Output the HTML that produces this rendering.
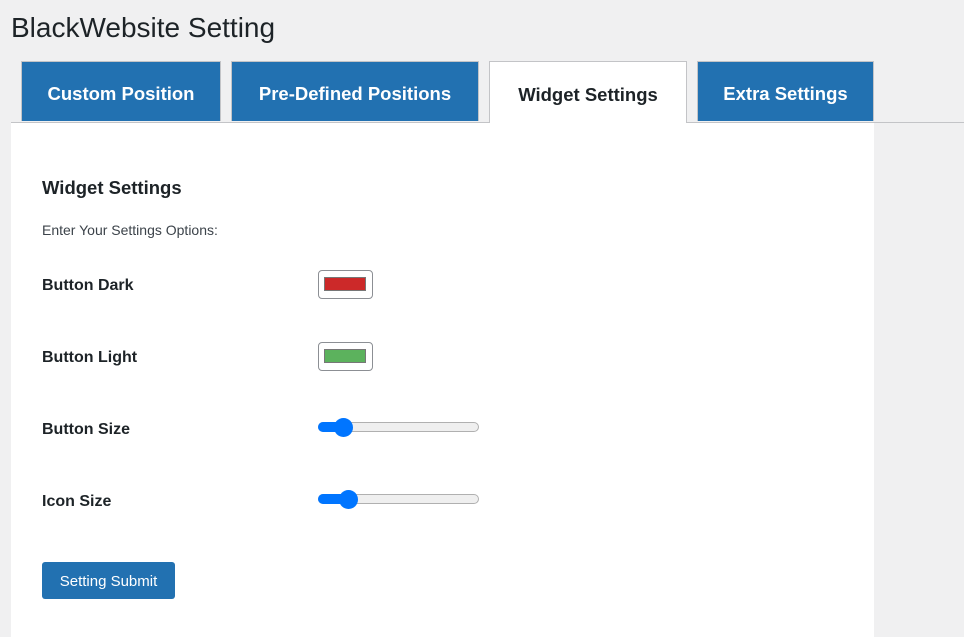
<!DOCTYPE html>
<html><head><style>
body{margin:0;width:964px;height:637px;background:#f0f0f1;font-family:"Segoe UI","Liberation Sans",sans-serif;position:relative;overflow:hidden;color:#1d2327}
.a{position:absolute}
.tab{position:absolute;top:61px;height:60px;padding-top:5px;background:#2271b1;border:1px solid #c3c4c7;border-bottom:none;box-sizing:border-box;color:#fff;font-weight:bold;font-size:18.5px;display:flex;align-items:center;justify-content:center}
.lbl{position:absolute;left:42px;font-size:16px;font-weight:600}
.sw{position:absolute;left:318px;width:55px;height:29px;border:1px solid #8c8f94;border-radius:4px;box-sizing:border-box;background:#fff}
.sw i{position:absolute;left:5px;top:6px;width:42px;height:14px;border:1px solid #777;box-sizing:border-box}
.tr{position:absolute;left:318px;width:161px;height:10px;border:1px solid #b0b0b0;border-radius:5px;background:#efefef;box-sizing:border-box}
.fill{position:absolute;left:318px;height:10px;border-radius:5px;background:#0075ff}
.th{position:absolute;width:19px;height:19px;border-radius:50%;background:#0075ff}
</style></head><body>
<div class="a" style="left:11px;top:12px;font-size:28px;color:#1d2327">BlackWebsite Setting</div>
<div class="a" style="left:11px;top:122px;width:953px;height:1px;background:#c3c4c7"></div>
<div class="a" style="left:11px;top:123px;width:863px;height:514px;background:#fff"></div>
<div class="tab" style="left:21px;width:200px">Custom Position</div>
<div class="tab" style="left:231px;width:248px">Pre-Defined Positions</div>
<div class="tab" style="left:489px;width:198px;height:62px;background:#fff;color:#1d2327">Widget Settings</div>
<div class="tab" style="left:697px;width:177px">Extra Settings</div>
<div class="a" style="left:42px;top:177px;font-size:18.5px;font-weight:600">Widget Settings</div>
<div class="a" style="left:42px;top:222px;font-size:14px;color:#3c434a">Enter Your Settings Options:</div>
<div class="lbl" style="top:277px">Button Dark</div>
<div class="lbl" style="top:349px">Button Light</div>
<div class="lbl" style="top:421px">Button Size</div>
<div class="lbl" style="top:493px">Icon Size</div>
<div class="sw" style="top:270px"><i style="background:#cc2929"></i></div>
<div class="sw" style="top:342px"><i style="background:#5cb25d"></i></div>
<div class="tr" style="top:422px"></div><div class="fill" style="top:422px;width:26px"></div><div class="th" style="left:334px;top:418px"></div>
<div class="tr" style="top:494px"></div><div class="fill" style="top:494px;width:30px"></div><div class="th" style="left:339px;top:490px"></div>
<div class="a" style="left:42px;top:562px;width:133px;height:37px;padding-top:2px;box-sizing:border-box;background:#2271b1;border-radius:3px;color:#fff;font-size:15px;display:flex;align-items:center;justify-content:center">Setting Submit</div>
</body></html>
